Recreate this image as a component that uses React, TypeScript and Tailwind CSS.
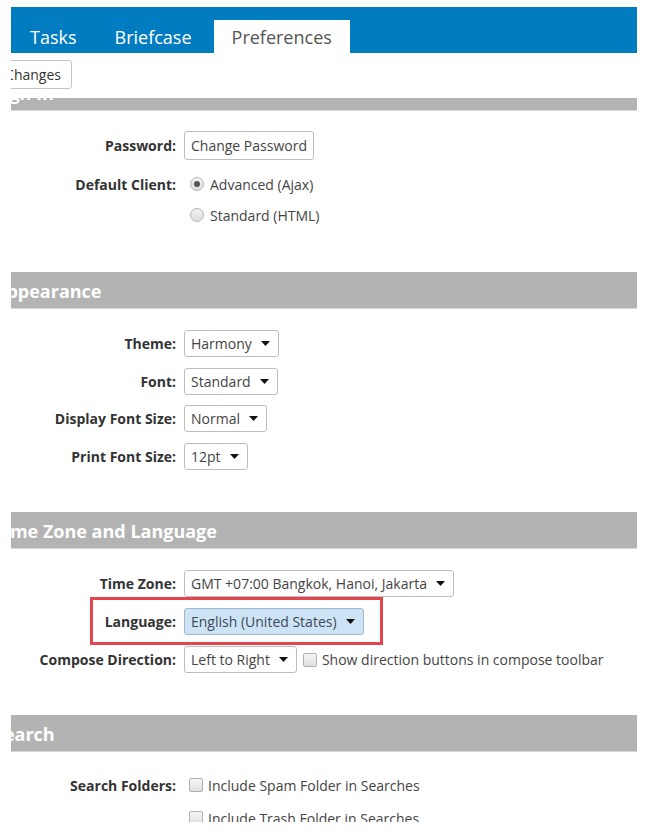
import React from 'react';

// ---------------------------------------------------------------------------
// Small controls
// ---------------------------------------------------------------------------

function Caret() {
  return (
    <svg className="w-[9px] h-[5px] shrink-0" viewBox="0 0 9 5">
      <path d="M0 0h9L4.5 5z" fill="#111" />
    </svg>
  );
}

function Select({ value, highlighted = false }: { value: string; highlighted?: boolean }) {
  return (
    <div
      className={`h-[27px] flex items-center gap-[9px] pl-[6px] pr-[8px] border rounded-[3px] text-[14px] shrink-0 ${
        highlighted ? 'bg-[#cde4f7] border-[#9fb8cc] text-[#3d4a56]' : 'bg-white border-[#bdbdbd] text-[#444]'
      }`}
    >
      <span className="whitespace-nowrap">{value}</span>
      <Caret />
    </div>
  );
}

function Radio({ checked = false }: { checked?: boolean }) {
  return (
    <span className="w-[14px] h-[14px] rounded-full border border-[#b5b5b5] bg-gradient-to-b from-[#f4f4f4] to-[#dcdcdc] flex items-center justify-center shrink-0">
      {checked && <span className="w-[6px] h-[6px] rounded-full bg-[#555]" />}
    </span>
  );
}

function Checkbox() {
  return (
    <span className="w-[14px] h-[14px] rounded-[2px] border border-[#b0b0b0] bg-gradient-to-b from-[#f6f6f6] to-[#e0e0e0] shrink-0" />
  );
}

function SectionHeader({ title }: { title: string }) {
  return (
    <div className="h-[37px] bg-[#b3b3b3] border-b border-[#d6d6d6] flex items-center shrink-0">
      <span className="ml-[-17px] mt-[2px] text-[18px] font-bold text-white whitespace-nowrap">{title}</span>
    </div>
  );
}

function Row({ label, className = '', children }: { label?: string; className?: string; children: React.ReactNode }) {
  return (
    <div className={`flex items-center gap-[8px] ${className}`}>
      <div className="w-[165px] shrink-0 text-right text-[14px] font-bold text-[#333] whitespace-nowrap">{label}</div>
      <div className="flex items-center">{children}</div>
    </div>
  );
}

// ---------------------------------------------------------------------------
// Page
// ---------------------------------------------------------------------------

export default function App() {
  return (
    <div className="relative w-[669px] h-[832px] bg-white overflow-hidden" style={{ fontFamily: '"Open Sans", sans-serif' }}>
      <div className="ml-[11px] mt-[7px] w-[626px] h-[815px] overflow-hidden flex flex-col">
        {/* Tab bar */}
        <div className="h-[46px] bg-[#027cc0] flex items-end shrink-0">
          <div className="h-[33px] px-[19px] pt-[1px] flex items-center text-[18px] text-white">Tasks</div>
          <div className="h-[33px] px-[19px] pt-[1px] flex items-center text-[18px] text-white">Briefcase</div>
          <div className="h-[33px] px-[18px] pt-[1px] ml-[3px] flex items-center text-[18px] text-[#555] bg-white">Preferences</div>
        </div>

        {/* Toolbar */}
        <div className="h-[45px] shrink-0 flex items-start">
          <div className="w-[61px] mt-[7px] flex justify-end">
            <button className="h-[29px] shrink-0 px-[10px] border border-[#c4c4c4] rounded-[3px] bg-white text-[14px] text-[#333] whitespace-nowrap">
              Save Changes
            </button>
          </div>
        </div>

        {/* Scrolled content */}
        <div className="flex-1 overflow-hidden">
          <div className="mt-[-24px] flex flex-col">
            <SectionHeader title="Sign In" />

            <Row label="Password:" className="mt-[20px]">
              <button className="h-[29px] px-[6px] border border-[#bdbdbd] rounded-[3px] bg-white text-[14px] text-[#444] whitespace-nowrap">
                Change Password
              </button>
            </Row>
            <Row label="Default Client:" className="mt-[13px] h-[22px]">
              <label className="ml-[6px] flex items-center gap-[6px] text-[14px] text-[#444]">
                <Radio checked />
                Advanced (Ajax)
              </label>
            </Row>
            <Row className="mt-[9px] h-[22px]">
              <label className="ml-[6px] flex items-center gap-[6px] text-[14px] text-[#444]">
                <Radio />
                Standard (HTML)
              </label>
            </Row>

            <div className="mt-[46px]">
              <SectionHeader title="Appearance" />
            </div>
            <Row label="Theme:" className="mt-[21px]">
              <Select value="Harmony" />
            </Row>
            <Row label="Font:" className="mt-[11px]">
              <Select value="Standard" />
            </Row>
            <Row label="Display Font Size:" className="mt-[10px]">
              <Select value="Normal" />
            </Row>
            <Row label="Print Font Size:" className="mt-[11px]">
              <Select value="12pt" />
            </Row>

            <div className="mt-[42px]">
              <SectionHeader title="Time Zone and Language" />
            </div>
            <Row label="Time Zone:" className="mt-[21px]">
              <Select value="GMT +07:00 Bangkok, Hanoi, Jakarta" />
            </Row>
            <Row label="Language:" className="mt-[11px]">
              <Select value="English (United States)" highlighted />
            </Row>
            <Row label="Compose Direction:" className="mt-[11px]">
              <Select value="Left to Right" />
              <label className="ml-[6px] flex items-center gap-[5px] text-[14px] text-[#444] whitespace-nowrap">
                <Checkbox />
                Show direction buttons in compose toolbar
              </label>
            </Row>

            <div className="mt-[42px]">
              <SectionHeader title="Search" />
            </div>
            <Row label="Search Folders:" className="mt-[22px] h-[22px]">
              <label className="ml-[5px] flex items-center gap-[5px] text-[14px] text-[#444] whitespace-nowrap">
                <Checkbox />
                Include Spam Folder in Searches
              </label>
            </Row>
            <Row className="mt-[11px] h-[22px]">
              <label className="ml-[5px] flex items-center gap-[5px] text-[14px] text-[#444] whitespace-nowrap">
                <Checkbox />
                Include Trash Folder in Searches
              </label>
            </Row>
          </div>
        </div>
      </div>

      {/* Annotation box around the Language row */}
      <div className="absolute left-[90px] top-[597px] w-[293px] h-[48px] border-[3px] border-[#e2454a]" />
    </div>
  );
}
